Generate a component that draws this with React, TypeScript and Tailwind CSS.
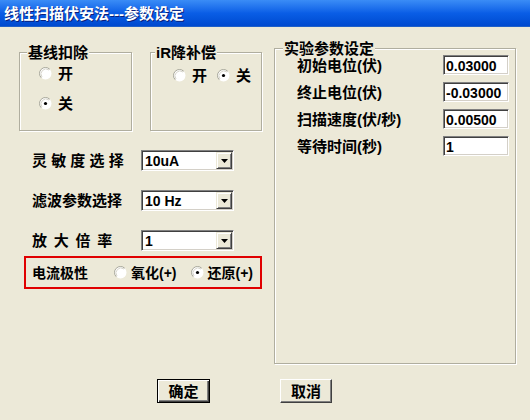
import React from "react";

function Radio({ checked }: { checked?: boolean }) {
  return (
    <svg width="13" height="13" viewBox="0 0 13 13" className="shrink-0 block">
      <circle cx="6.5" cy="6.5" r="6" fill="#ffffff" />
      <path d="M2.25 10.75 A6 6 0 0 1 10.75 2.25" stroke="#a7a69a" strokeWidth="1" fill="none" />
      <path d="M3 10 A5 5 0 0 1 10 3" stroke="#d8d6cc" strokeWidth="1" fill="none" />
      {checked && <circle cx="6.5" cy="6.5" r="1.6" fill="#000000" />}
    </svg>
  );
}

function Group({
  label,
  labelLeft,
  className,
  children,
}: {
  label: string;
  labelLeft: string;
  className: string;
  children?: React.ReactNode;
}) {
  return (
    <div className={"relative shrink-0 border border-[#b0ae9f] shadow-[inset_1px_1px_0_#ffffff,1px_1px_0_#ffffff] " + className}>
      <span className={"absolute -top-[9px] bg-[#ECE9D8] px-[1px] leading-[17px] whitespace-nowrap " + labelLeft}>{label}</span>
      {children}
    </div>
  );
}

function Combo({ value }: { value: string }) {
  return (
    <div className="flex h-[21px] w-[93px] shrink-0 border border-t-[#808080] border-l-[#808080] border-b-white border-r-white bg-white p-[1px] shadow-[inset_1px_1px_0_#404040,inset_-1px_-1px_0_#d4d0c8]">
      <div className="flex-1 flex items-center pl-[2px] pt-[1px] font-['Liberation_Sans',sans-serif] text-[14px] font-bold">{value}</div>
      <div className="w-[16px] h-full flex items-center justify-center bg-[#ECE9D8] border border-t-[#ECE9D8] border-l-[#ECE9D8] border-b-[#404040] border-r-[#404040] shadow-[inset_1px_1px_0_#ffffff,inset_-1px_-1px_0_#808080]">
        <svg width="7" height="4" viewBox="0 0 7 4" className="block">
          <path d="M0 0 H7 L3.5 4 Z" fill="#000000" />
        </svg>
      </div>
    </div>
  );
}

function Edit({ value }: { value: string }) {
  return (
    <div className="flex items-center h-[20px] w-[66px] shrink-0 border border-t-[#808080] border-l-[#808080] border-b-white border-r-white bg-white pl-[2px] pt-[1px] shadow-[inset_1px_1px_0_#404040,inset_-1px_-1px_0_#d4d0c8] font-['Liberation_Sans',sans-serif] text-[14px] font-bold">
      {value}
    </div>
  );
}

export default function App() {
  return (
    <div className="w-[530px] h-[420px] overflow-hidden bg-[#ECE9D8] flex flex-col text-black text-[15px] font-bold leading-none font-['Liberation_Sans','Noto_Sans_CJK_SC',sans-serif]">
      <div className="h-[27px] shrink-0 flex items-center pl-[4px] text-white bg-gradient-to-b from-[#3a8cf6] via-[#0a5ee6] to-[#0049cf] border-b border-[#1e5fc8] [text-shadow:1px_1px_0_#0a1f7a]">
        线性扫描伏安法---参数设定
      </div>

      <div className="flex items-start">
        <div className="ml-[19px] mt-[25px] w-[243px] flex flex-col">
          <div className="flex gap-[18px]">
            <Group label="基线扣除" labelLeft="left-[7px]" className="w-[113px] h-[79px]">
              <div className="flex flex-col gap-[14px] pl-[19px] pt-[12px]">
                <div className="flex items-center gap-[6px] h-[16px]">
                  <Radio />
                  <span>开</span>
                </div>
                <div className="flex items-center gap-[6px] h-[16px]">
                  <Radio checked />
                  <span>关</span>
                </div>
              </div>
            </Group>
            <Group label="iR降补偿" labelLeft="left-[4px]" className="w-[112px] h-[79px]">
              <div className="flex items-center pl-[22px] pt-[14px] h-[30px]">
                <Radio />
                <span className="ml-[6px]">开</span>
                <span className="ml-[10px]"><Radio checked /></span>
                <span className="ml-[6px]">关</span>
              </div>
            </Group>
          </div>

          <div className="mt-[19px] flex items-center h-[21px] pl-[13px]">
            <span className="w-[109px] whitespace-pre">灵 敏 度 选 择</span>
            <Combo value="10uA" />
          </div>
          <div className="mt-[19px] flex items-center h-[21px] pl-[13px]">
            <span className="w-[109px]">滤波参数选择</span>
            <Combo value="10 Hz" />
          </div>
          <div className="mt-[19px] flex items-center h-[21px] pl-[13px]">
            <span className="w-[109px] whitespace-pre tracking-[1.3px]">放 大 倍 率</span>
            <Combo value="1" />
          </div>

          <div className="mt-[5px] ml-[5px] w-[238px] h-[33px] border-2 border-[#e00000] flex items-center pl-[6px] text-[14px]">
            <span>电流极性</span>
            <span className="ml-[26px]"><Radio /></span>
            <span className="ml-[4px]">氧化(+)</span>
            <span className="ml-[14px]"><Radio checked /></span>
            <span className="ml-[4px]">还原(+)</span>
          </div>
        </div>

        <Group label="实验参数设定" labelLeft="left-[8px]" className="ml-[12px] mt-[21px] w-[242px] h-[316px]">
          <div className="flex flex-col gap-[7px] pt-[6px] pl-[22px]">
            <div className="flex items-center">
              <span className="w-[146px]">初始电位(伏)</span>
              <Edit value="0.03000" />
            </div>
            <div className="flex items-center">
              <span className="w-[146px]">终止电位(伏)</span>
              <Edit value="-0.03000" />
            </div>
            <div className="flex items-center">
              <span className="w-[146px]">扫描速度(伏/秒)</span>
              <Edit value="0.00500" />
            </div>
            <div className="flex items-center">
              <span className="w-[146px]">等待时间(秒)</span>
              <Edit value="1" />
            </div>
          </div>
        </Group>
      </div>

      <div className="mt-[15px] pl-[157px] flex items-center gap-[70px]">
        <button className="w-[53px] h-[24px] flex items-center justify-center bg-[#ECE9D8] border border-black shadow-[inset_1px_1px_0_#ffffff,inset_-1px_-1px_0_#404040,inset_-2px_-2px_0_#808080]">
          确定
        </button>
        <button className="w-[52px] h-[24px] flex items-center justify-center bg-[#ECE9D8] border border-t-white border-l-white border-b-[#404040] border-r-[#404040] shadow-[inset_-1px_-1px_0_#808080]">
          取消
        </button>
      </div>
    </div>
  );
}
